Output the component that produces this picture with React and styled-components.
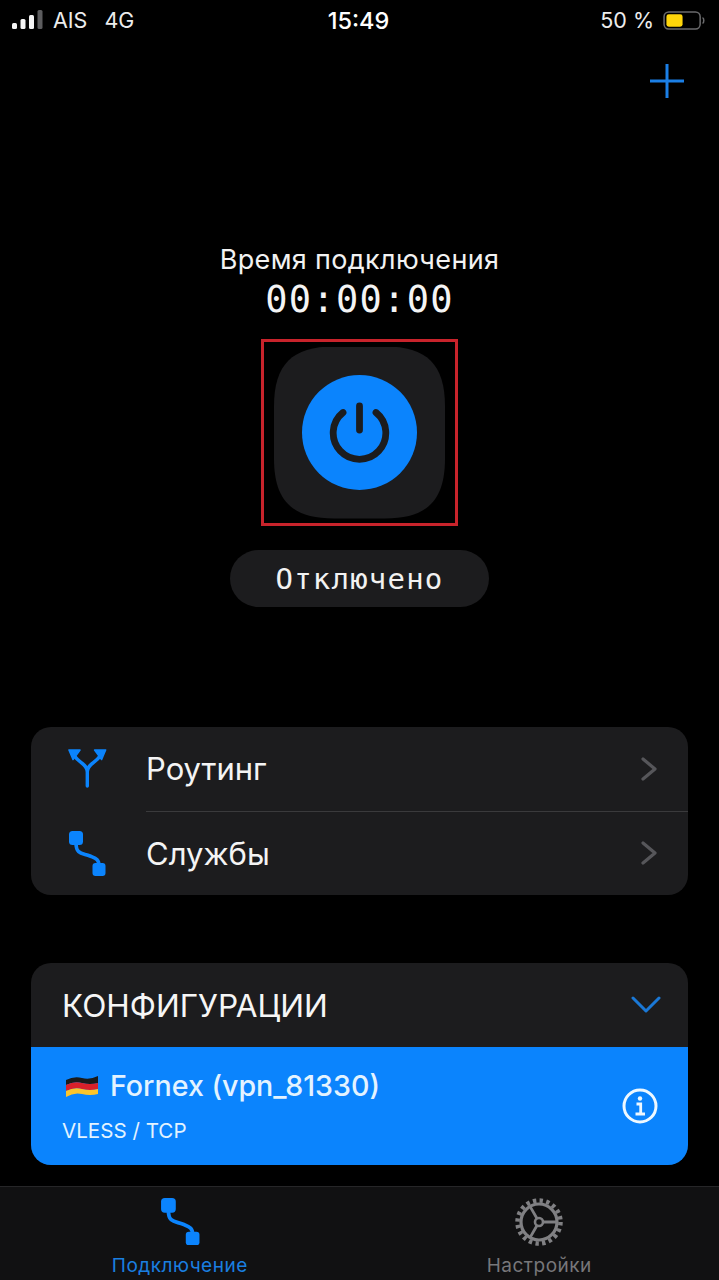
import React from "react";
import styled, { createGlobalStyle } from "styled-components";

const GlobalStyle = createGlobalStyle`
  html, body {
    margin: 0;
    padding: 0;
    background: #000;
  }
  * {
    box-sizing: border-box;
  }
`;

const BLUE = "#0b84fd";
const SANS = `Inter, "Noto Sans", "Liberation Sans", sans-serif`;
const MONO = `"DejaVu Sans Mono", "Liberation Mono", monospace`;

const Page = styled.div`
  width: 719px;
  height: 1280px;
  overflow: hidden;
  background: #000;
  color: #fff;
  font-family: ${SANS};
  display: flex;
  flex-direction: column;
`;

const StatusBar = styled.div`
  height: 40px;
  padding: 0 14px 0 12px;
  display: grid;
  grid-template-columns: 1fr auto 1fr;
  align-items: center;
  font-size: 21.5px;
  color: #ececec;
`;

const StatusLeft = styled.div`
  display: flex;
  align-items: center;
`;

const Carrier = styled.span`
  margin-left: ${(p) => p.$gap}px;
`;

const Clock = styled.div`
  font-size: 23.5px;
  font-weight: 500;
  color: #fff;
`;

const StatusRight = styled.div`
  display: flex;
  justify-content: flex-end;
  align-items: center;
  gap: 9px;
`;

const ActionBar = styled.div`
  height: 58px;
  padding: 24px 35px 0 0;
  display: flex;
  justify-content: flex-end;
`;

const Connection = styled.section`
  margin-top: 146px;
  display: flex;
  flex-direction: column;
  align-items: center;
`;

const TimeLabel = styled.div`
  font-size: 27px;
  line-height: 32px;
  letter-spacing: 0.35px;
  color: #f2f2f2;
`;

const Timer = styled.div`
  margin-top: 2px;
  font-family: ${MONO};
  font-size: 37px;
  line-height: 43px;
  letter-spacing: 1.3px;
  color: #f4f4f4;
`;

const Highlight = styled.div`
  margin-top: 18px;
  width: 197px;
  height: 187px;
  border: 3px solid #c8232b;
  display: flex;
  align-items: center;
  justify-content: center;
`;

const Squircle = styled.div`
  width: 171px;
  height: 172px;
  clip-path: path("M60 0 H111 C153 0 171 18 171 60 V112 C171 154 153 172 111 172 H60 C18 172 0 154 0 112 V60 C0 18 18 0 60 0 Z");
  background: #1c1c1e;
  display: flex;
  align-items: center;
  justify-content: center;
`;

const PowerButton = styled.div`
  width: 115px;
  height: 115px;
  border-radius: 50%;
  background: ${BLUE};
  display: flex;
  align-items: center;
  justify-content: center;
`;

const StatePill = styled.div`
  margin-top: 24px;
  width: 259px;
  height: 57px;
  border-radius: 29px;
  background: #1c1c1e;
  display: flex;
  align-items: center;
  justify-content: center;
  font-family: ${MONO};
  font-size: 29px;
  letter-spacing: 1.2px;
  color: #f2f2f2;
`;

const Card = styled.section`
  margin: ${(p) => p.$top}px 31px 0;
  border-radius: 20px;
  background: #1c1c1e;
  overflow: hidden;
`;

const Row = styled.div`
  height: 83.5px;
  padding: 0 31px 0 37px;
  display: flex;
  align-items: center;
  font-size: 31px;
  color: #f4f4f4;
`;

const RowIcon = styled.div`
  width: 78px;
  display: flex;
`;

const RowLabel = styled.span`
  flex: 1;
`;

const Divider = styled.div`
  height: 1px;
  margin-left: 115px;
  background: #3a3a3c;
`;

const ConfigHeader = styled.div`
  height: 84px;
  padding: 0 27px 0 31px;
  display: flex;
  align-items: center;
  justify-content: space-between;
  font-size: 31.6px;
  color: #f6f6f6;
`;

const ConfigItem = styled.div`
  height: 118px;
  padding: 0 30px 0 31px;
  background: ${BLUE};
  display: flex;
  align-items: center;
  justify-content: space-between;
  color: #e3f3ff;
`;

const ConfigText = styled.div`
  display: flex;
  flex-direction: column;
  gap: 17px;
`;

const ConfigName = styled.div`
  display: flex;
  align-items: center;
  gap: 11px;
  padding-left: 3px;
  font-size: 28.6px;
  font-weight: 500;
  line-height: 32px;
`;

const ConfigMeta = styled.div`
  font-size: 20.6px;
  line-height: 24px;
`;

const TabBar = styled.nav`
  margin-top: auto;
  height: 94px;
  background: #111112;
  border-top: 1px solid #262628;
  display: grid;
  grid-template-columns: 1fr 1fr;
`;

const Tab = styled.div`
  padding-top: 11px;
  display: flex;
  flex-direction: column;
  align-items: center;
  gap: 9px;
  font-size: 19px;
  line-height: 22px;
  letter-spacing: 0.5px;
  color: ${(p) => (p.$active ? "#1a7fe0" : "#77777a")};
`;

const TabIcon = styled.div`
  height: 48px;
  display: flex;
  align-items: flex-start;
`;

const SignalIcon = () => (
  <svg width="32" height="20" viewBox="0 0 32 20">
    <rect x="0" y="13" width="5" height="6" rx="1.5" fill="#f4f4f4" />
    <rect x="8.5" y="9" width="5" height="10" rx="1.5" fill="#f4f4f4" />
    <rect x="17" y="5" width="5" height="14" rx="1.5" fill="#f4f4f4" />
    <rect x="25.5" y="0" width="5" height="19" rx="1.5" fill="#5c5c5e" />
  </svg>
);

const BatteryIcon = () => (
  <svg width="42" height="19" viewBox="0 0 44 20">
    <rect x="1" y="1" width="38" height="18" rx="5" fill="none" stroke="#6a6a6c" strokeWidth="1.6" />
    <rect x="3.5" y="3.5" width="17" height="13" rx="2.5" fill="#ffd60a" />
    <path d="M41.5 7 c1.8 .6 1.8 5.4 0 6" fill="none" stroke="#6a6a6c" strokeWidth="1.6" />
  </svg>
);

const PlusIcon = () => (
  <svg width="34" height="34" viewBox="0 0 34 34">
    <path d="M17 0 V34 M0 17 H34" stroke="#1b7fe6" strokeWidth="3" strokeLinecap="round" />
  </svg>
);

const PowerIcon = () => (
  <svg width="62" height="62" viewBox="0 0 62 62" fill="none" stroke="#1c1c1e" strokeWidth="6.8" strokeLinecap="round">
    <path d="M30.5 4 V28" />
    <path d="M14 10.5 A26.3 26.3 0 1 0 47 10.5" />
  </svg>
);

const ForkIcon = () => (
  <svg width="40" height="40" viewBox="0 0 40 40">
    <path
      d="M19.3 37 V23 C19.3 15 11 14 6.5 7 M19.3 23 C19.3 15 27.6 14 32.1 7"
      fill="none"
      stroke={BLUE}
      strokeWidth="3.4"
      strokeLinecap="round"
    />
    <path d="M1 1 H12 L5 10.5 Z M37.6 1 H26.6 L33.6 10.5 Z" fill={BLUE} stroke={BLUE} strokeWidth="1.6" strokeLinejoin="round" />
  </svg>
);

const NodesIcon = ({ width = 38 }) => (
  <svg width={width} height={(width * 45) / 38} viewBox="-1 0 38 45">
    <path
      d="M7 12 C7 24 14 22 21 25 C27 27.5 30 28 30 35"
      fill="none"
      stroke={BLUE}
      strokeWidth="3.6"
    />
    <rect x="0" y="0" width="14" height="14" rx="3.5" fill={BLUE} />
    <rect x="23.5" y="32" width="13" height="13" rx="3" fill={BLUE} />
  </svg>
);

const Chevron = () => (
  <svg width="16" height="24" viewBox="0 0 16 24">
    <path d="M2 2 L14 12 L2 22" fill="none" stroke="#56565a" strokeWidth="3.2" strokeLinecap="round" strokeLinejoin="round" />
  </svg>
);

const ChevronDown = () => (
  <svg width="30" height="18" viewBox="0 0 30 18">
    <path d="M2 2 L15 15 L28 2" fill="none" stroke="#1a78d6" strokeWidth="3" strokeLinecap="round" strokeLinejoin="round" />
  </svg>
);

const FlagIcon = () => (
  <svg width="34" height="24" viewBox="0 0 34 24">
    <path d="M1 6 Q9 2 17 4 T33 2 V9 Q25 11 17 9 T1 11 Z" fill="#1a1a1a" />
    <path d="M1 11 Q9 7 17 9 T33 9 V15 Q25 17 17 15 T1 17 Z" fill="#d8202a" />
    <path d="M1 17 Q9 13 17 15 T33 15 V20 Q25 22 17 20 T1 23 Z" fill="#fbc52c" />
  </svg>
);

const InfoIcon = () => (
  <svg width="36" height="36" viewBox="0 0 36 36" fill="none" stroke="#eef8ff">
    <circle cx="18" cy="18" r="16" strokeWidth="3" />
    <circle cx="18" cy="10.5" r="2.2" fill="#eef8ff" stroke="none" />
    <path d="M14.5 16 H18.7 V26 M13.5 26 H23" strokeWidth="2.8" />
  </svg>
);

const GearIcon = () => (
  <svg width="48" height="48" viewBox="0 0 48 48" fill="none" stroke="#808083">
    <circle cx="24" cy="24" r="21.5" strokeWidth="4.5" strokeDasharray="3.4 3.35" />
    <circle cx="24" cy="24" r="18" strokeWidth="3.2" />
    <circle cx="24" cy="24" r="4" strokeWidth="2.6" />
    <path d="M28 24 H42 M22 20.5 L15 8.4 M22 27.5 L15 39.6" strokeWidth="2.8" />
  </svg>
);

const App = () => {
  return (
    <Page>
      <GlobalStyle />
      <StatusBar>
        <StatusLeft>
          <SignalIcon />
          <Carrier $gap={9}>AIS</Carrier>
          <Carrier $gap={17}>4G</Carrier>
        </StatusLeft>
        <Clock>15:49</Clock>
        <StatusRight>
          <span>50 %</span>
          <BatteryIcon />
        </StatusRight>
      </StatusBar>

      <ActionBar>
        <PlusIcon />
      </ActionBar>

      <Connection>
        <TimeLabel>Время подключения</TimeLabel>
        <Timer>00:00:00</Timer>
        <Highlight>
          <Squircle>
            <PowerButton>
              <PowerIcon />
            </PowerButton>
          </Squircle>
        </Highlight>
        <StatePill>Отключено</StatePill>
      </Connection>

      <Card $top={120}>
        <Row>
          <RowIcon>
            <ForkIcon />
          </RowIcon>
          <RowLabel>Роутинг</RowLabel>
          <Chevron />
        </Row>
        <Divider />
        <Row>
          <RowIcon>
            <NodesIcon />
          </RowIcon>
          <RowLabel>Службы</RowLabel>
          <Chevron />
        </Row>
      </Card>

      <Card $top={68}>
        <ConfigHeader>
          КОНФИГУРАЦИИ
          <ChevronDown />
        </ConfigHeader>
        <ConfigItem>
          <ConfigText>
            <ConfigName>
              <FlagIcon />
              Fornex (vpn_81330)
            </ConfigName>
            <ConfigMeta>VLESS / TCP</ConfigMeta>
          </ConfigText>
          <InfoIcon />
        </ConfigItem>
      </Card>

      <TabBar>
        <Tab $active>
          <TabIcon>
            <NodesIcon width={40} />
          </TabIcon>
          Подключение
        </Tab>
        <Tab>
          <TabIcon>
            <GearIcon />
          </TabIcon>
          Настройки
        </Tab>
      </TabBar>
    </Page>
  );
};

export default App;
